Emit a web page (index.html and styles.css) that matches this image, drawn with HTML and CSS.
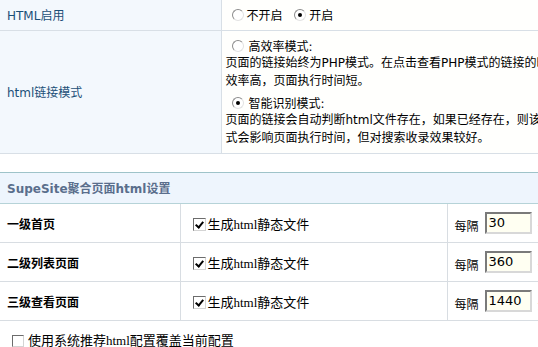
FILE: index.html
```html
<!DOCTYPE html>
<html lang="zh-CN">
<head>
<meta charset="utf-8">
<title>HTML设置</title>
<link rel="stylesheet" href="styles.css">
</head>
<body>
<table class="opt">
  <colgroup><col class="c-lbl"><col class="c-val"></colgroup>
  <tr>
    <th class="lbl">HTML启用</th>
    <td class="val">
      <label class="radio"><span class="rb"></span>不开启</label>
      <label class="radio"><span class="rb on"></span>开启</label>
    </td>
  </tr>
  <tr>
    <th class="lbl">html链接模式</th>
    <td class="val multi">
      <div class="mode"><span class="rb"></span>高效率模式:</div>
      <div class="desc">页面的链接始终为PHP模式。在点击查看PHP模式的链接的时候生成html文件，此模式<br>效率高，页面执行时间短。</div>
      <div class="mode"><span class="rb on"></span>智能识别模式:</div>
      <div class="desc">页面的链接会自动判断html文件存在，如果已经存在，则该链接为html链接，此模<br>式会影响页面执行时间，但对搜索收录效果较好。</div>
    </td>
  </tr>
</table>

<table class="agg">
  <colgroup><col class="c-name"><col class="c-gen"><col class="c-every"></colgroup>
  <tr class="head">
    <th colspan="3">SupeSite聚合页面html设置</th>
  </tr>
  <tr>
    <td class="name">一级首页</td>
    <td class="gen"><span class="cb on"></span>生成html静态文件</td>
    <td class="every"><div class="ev">每隔<span class="inp">30</span>分钟</div></td>
  </tr>
  <tr>
    <td class="name">二级列表页面</td>
    <td class="gen"><span class="cb on"></span>生成html静态文件</td>
    <td class="every"><div class="ev">每隔<span class="inp">360</span>分钟</div></td>
  </tr>
  <tr>
    <td class="name">三级查看页面</td>
    <td class="gen"><span class="cb on"></span>生成html静态文件</td>
    <td class="every"><div class="ev">每隔<span class="inp">1440</span>分钟</div></td>
  </tr>
  <tr class="foot">
    <td colspan="3"><span class="cb"></span>使用系统推荐html配置覆盖当前配置</td>
  </tr>
</table>
</body>
</html>
```
FILE: styles.css
```css
html, body {
  margin: 0;
  padding: 0;
  overflow: hidden;
  background: #fff;
}
body {
  width: 538px;
  height: 347px;
  font-family: "DejaVu Sans", "Noto Sans CJK SC", sans-serif;
  font-size: 12px;
  color: #000;
}
table {
  border-collapse: collapse;
  border-spacing: 0;
  table-layout: fixed;
}
.opt {
  width: 640px;
}
.c-lbl { width: 221px; }
.c-val { width: 419px; }
.opt .lbl {
  background: #f3f8fd;
  color: #1b4f78;
  font-weight: normal;
  text-align: left;
  padding: 0 0 0 7px;
  border-right: 1px solid #d8dfe6;
  border-bottom: 1px solid #d8dfe6;
  font-family: "DejaVu Sans", "Noto Sans CJK SC", sans-serif;
  font-size: 12px;
}
.opt .val {
  background: #fffffd;
  border-bottom: 1px solid #d8dfe6;
  padding: 0 0 0 10px;
  height: 30px;
  box-sizing: border-box;
  font-family: "DejaVu Sans", "Noto Sans CJK SC", sans-serif;
  white-space: nowrap;
}
.opt .val.multi {
  padding: 7px 0 6px 4px;
  height: auto;
}
.radio {
  display: inline-flex;
  align-items: center;
  margin-right: 8px;
}
.rb {
  display: inline-block;
  width: 12px;
  height: 12px;
  border: 1px solid #8c8c8c;
  border-right-color: #e2e2e2;
  border-bottom-color: #e2e2e2;
  border-radius: 50%;
  background: #fff;
  margin-right: 3px;
  position: relative;
  box-sizing: border-box;
}
.rb.on::after {
  content: "";
  position: absolute;
  left: 3px;
  top: 3px;
  width: 4px;
  height: 4px;
  border-radius: 50%;
  background: #000;
}
.mode {
  display: flex;
  align-items: center;
  height: 16px;
  padding-left: 6px;
}
.mode .rb {
  margin-right: 5px;
}
.desc {
  line-height: 18px;
  white-space: nowrap;
}
.mode + .desc {
  margin-bottom: 5px;
}
.mode + .desc:last-child {
  margin-bottom: 0;
}

.agg {
  width: 640px;
  margin-top: 18px;
  font-family: "Liberation Serif", "Noto Sans CJK SC", serif;
  font-size: 13px;
}
.c-name { width: 180px; }
.c-gen { width: 267px; }
.c-every { width: 193px; }
.agg .head th {
  height: 31px;
  box-sizing: border-box;
  background: #eef5fd;
  border-top: 1px solid #9ec3c9;
  border-bottom: 1px solid #b6d3d8;
  text-align: left;
  padding: 0 0 0 7px;
  color: #5a6e8c;
  font-family: "DejaVu Sans", "Noto Sans CJK SC", sans-serif;
  font-size: 12px;
  font-weight: bold;
}
.agg td {
  height: 39px;
  box-sizing: border-box;
  border-bottom: 1px solid #d8dde2;
  padding: 0;
}
.agg td.name {
  padding: 2px 0 0 7px;
  font-family: "Noto Sans CJK SC", sans-serif;
  font-size: 12px;
  font-weight: bold;
  border-right: 1px solid #d8dde2;
}
.agg td.gen {
  padding: 2px 0 0 12px;
  border-right: 1px solid #d8dde2;
}
.agg td.every {
  padding: 1px 0 0 7px;
  font-family: "Noto Sans CJK SC", sans-serif;
  font-size: 12px;
  white-space: nowrap;
}
.ev {
  display: flex;
  align-items: flex-end;
  gap: 6px;
  line-height: 16px;
}
.cb {
  display: inline-block;
  width: 13px;
  height: 13px;
  box-sizing: border-box;
  border: 1px solid #6c6c6c;
  border-right-color: #d4d4d4;
  border-bottom-color: #d4d4d4;
  background: #fff;
  vertical-align: -2px;
  margin-right: 2px;
  position: relative;
}
.cb.on::after {
  content: "";
  position: absolute;
  left: 3px;
  top: 1px;
  width: 3px;
  height: 6px;
  border-right: 2px solid #000;
  border-bottom: 2px solid #000;
  transform: rotate(40deg);
}
.inp {
  display: inline-block;
  width: 47px;
  height: 22px;
  box-sizing: border-box;
  border: 2px solid #7a7a7a;
  border-right-color: #d8d8d8;
  border-bottom-color: #d8d8d8;
  background: #fffff2;
  padding: 1px 0 0 2px;
  line-height: 16px;
  font-family: "DejaVu Sans", sans-serif;
  font-size: 13px;
  flex: none;
}
.agg .foot td {
  height: 34px;
  border-bottom: none;
  padding: 4px 0 0 12px;
  font-family: "Liberation Serif", "Noto Sans CJK SC", serif;
  font-size: 13px;
}
.foot .cb {
  width: 12px;
  height: 12px;
  margin-right: 4px;
}
```
